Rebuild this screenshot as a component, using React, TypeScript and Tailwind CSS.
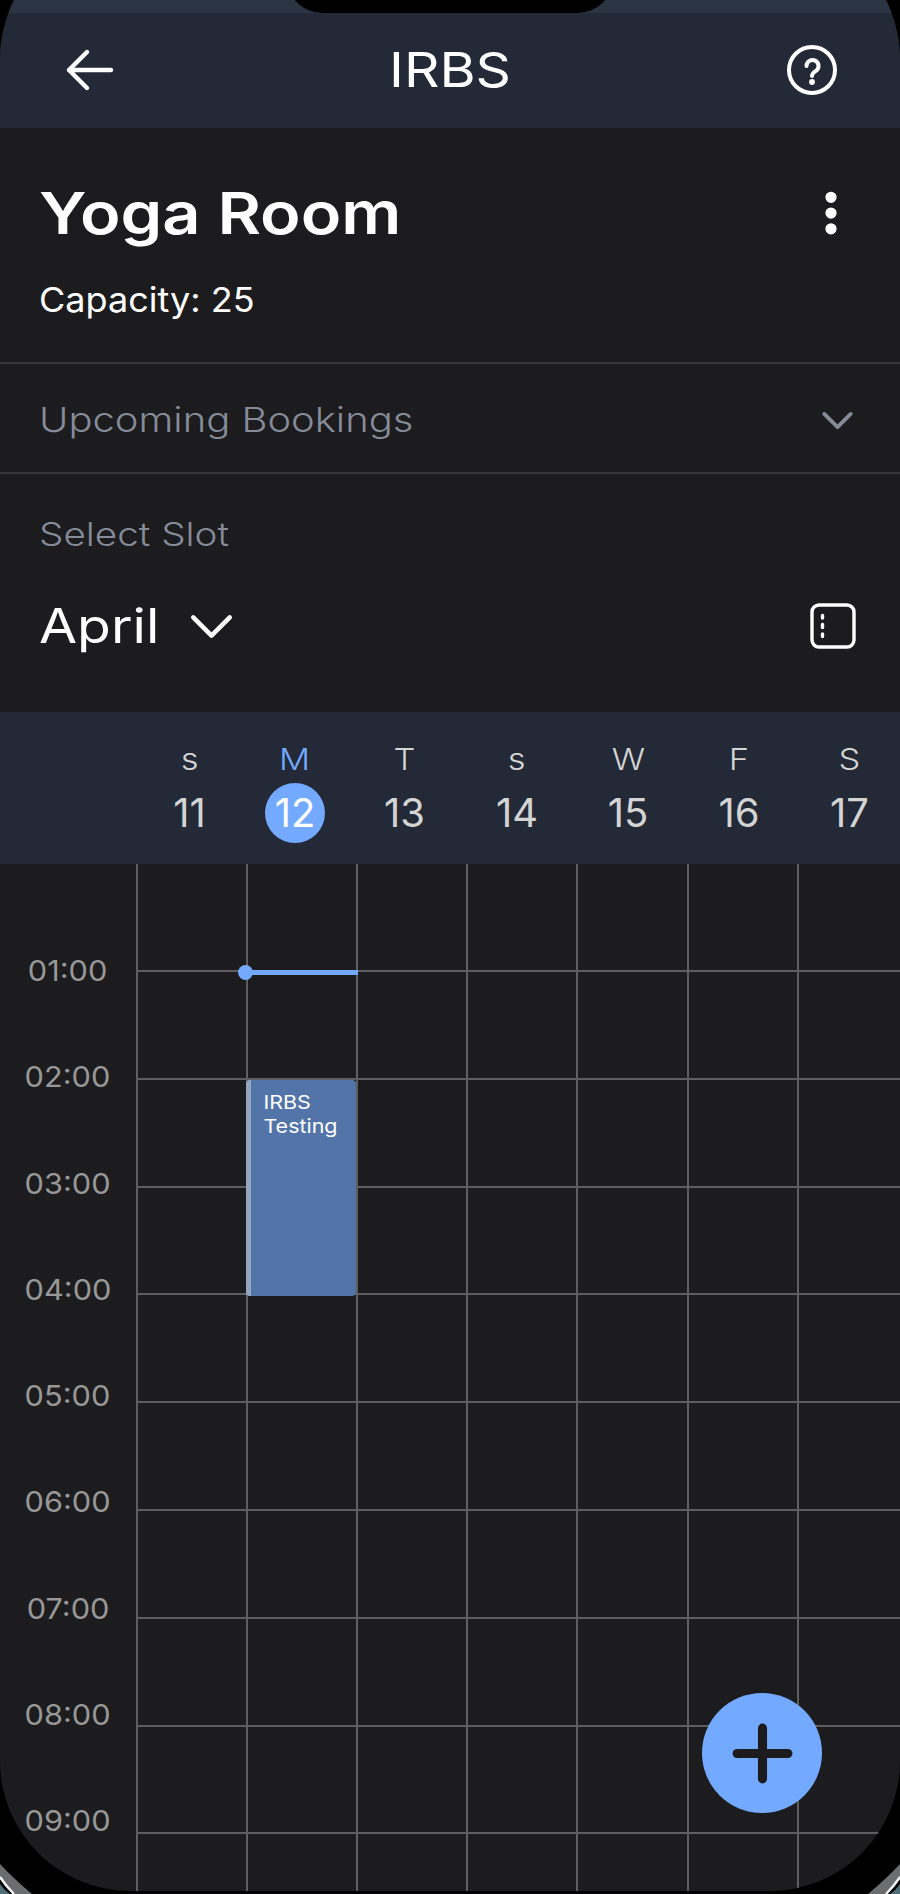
import { ChevronDown, EllipsisVertical, Plus } from "lucide-react";

// Room schedule screen, phone frame cropped at the edges.

const days = [
  { label: "s", date: "11", w: "w-[111px]" },
  { label: "M", date: "12", w: "w-[100px]", active: true },
  { label: "T", date: "13", w: "w-[119px]" },
  { label: "s", date: "14", w: "w-[106px]" },
  { label: "W", date: "15", w: "w-[116px]" },
  { label: "F", date: "16", w: "w-[106px]" },
  { label: "S", date: "17", w: "w-[115px]" },
];

const hours = ["01:00", "02:00", "03:00", "04:00", "05:00", "06:00", "07:00", "08:00", "09:00"];

function BackIcon() {
  return (
    <svg width="50" height="44" viewBox="0 0 50 44" fill="none" stroke="white" strokeWidth="4.4" strokeLinecap="round" strokeLinejoin="round">
      <path d="M22 4 4 22l18 18M4 22h42" />
    </svg>
  );
}

function HelpIcon() {
  return (
    <svg width="50" height="50" viewBox="0 0 50 50" fill="none" stroke="white" strokeWidth="4" strokeLinecap="round">
      <circle cx="25" cy="25" r="23" />
      <path d="M19.5 21a6 6 0 1 1 9.4 4.9c-2.4 1.6-3.9 2.6-3.9 5.1" />
      <circle cx="25" cy="37" r="2.9" fill="white" stroke="none" />
    </svg>
  );
}

function CalendarIcon() {
  return (
    <svg width="46" height="46" viewBox="0 0 46 46" fill="none" stroke="white" strokeWidth="3.4" strokeLinecap="round">
      <rect x="2" y="2" width="42" height="42" rx="7" />
      <path d="M12.5 12.5v2.5M12.5 21.5v3M12.5 31v2.5" />
    </svg>
  );
}

function FrameCorner({ className }: { className: string }) {
  return (
    <svg width="32" height="32" viewBox="0 0 32 32" className={className}>
      <path d="M0 2Q14 17 32 32H14Q6 24 0 15Z" fill="#6b6d6e" />
      <path d="M0 15Q6 24 14 32" fill="none" stroke="#f2f2f2" strokeWidth="2.4" />
      <path d="M0 22Q4 28 10 32H0Z" fill="#4f7078" />
    </svg>
  );
}

function Row({ first }: { first?: boolean }) {
  return (
    <div className={first ? "grid h-[106px] grid-cols-7" : "grid h-[107.8px] grid-cols-7 border-t-2 border-[#5e5e60]"}>
      {[0, 1, 2, 3, 4, 5, 6].map((i) => (
        <div key={i} className="border-l-2 border-[#5e5e60]" />
      ))}
    </div>
  );
}

export default function App() {
  return (
    <div className="relative h-[1894px] w-[900px] overflow-hidden bg-black font-['Inter',sans-serif] text-white">
      <div className="relative -mt-[71px] flex h-[1962px] flex-col overflow-hidden rounded-[130px] bg-[#1c1c1e]">
        <header className="relative h-[199px] shrink-0 bg-[#232936] pt-[71px]">
          <div className="absolute left-0 right-0 top-0 h-[84px] bg-[#2a3442]" />
          <div className="absolute left-[286px] top-0 h-[84px] w-[328px] rounded-b-[37px] bg-black" />
          <div className="relative flex h-[128px] items-center justify-between pl-[65px] pr-[63px] pt-[12px]">
            <BackIcon />
            <span className="-ml-[3px] inline-block scale-x-[1.15] text-[48px] leading-[60px]">IRBS</span>
            <HelpIcon />
          </div>
        </header>

        <section className="flex h-[236px] shrink-0 flex-col border-b-2 border-[#35363a] pl-[39px] pr-[44px]">
          <div className="mt-[50px] flex items-center justify-between">
            <h1 className="inline-block origin-left scale-x-[1.15] text-[58px] font-semibold leading-[70px]">Yoga Room</h1>
            <EllipsisVertical size={54} strokeWidth={3} fill="currentColor" className="-mr-[2px]" />
          </div>
          <p className="mt-[30px] origin-left scale-x-[1.06] text-[34px] leading-[44px]">Capacity: 25</p>
        </section>

        <section className="flex h-[110px] shrink-0 items-center justify-between border-b-2 border-[#35363a] pl-[39px] pr-[36px] pt-[4px] text-[#858b99]">
          <span className="inline-block origin-left scale-x-[1.175] text-[34px] font-light leading-[44px]">Upcoming Bookings</span>
          <ChevronDown size={53} strokeWidth={1.7} />
        </section>

        <section className="flex h-[238px] shrink-0 flex-col pl-[39px] pr-[44px]">
          <p className="mt-[38px] origin-left scale-x-[1.17] text-[33px] font-light leading-[44px] text-[#858b99]">Select Slot</p>
          <div className="mt-[38px] flex items-center justify-between">
            <div className="flex items-center gap-[31px]">
              <span className="inline-block origin-left scale-x-[1.15] text-[48px] leading-[64px]">April</span>
              <ChevronDown size={73} strokeWidth={1.48} className="-my-[5px]" />
            </div>
            <CalendarIcon />
          </div>
        </section>

        <section className="flex h-[152px] shrink-0 bg-[#232936] pl-[134px] pt-[27px]">
          {days.map((d) => (
            <div key={d.date} className={`flex shrink-0 flex-col items-center ${d.w}`}>
              <span
                className={
                  d.active
                    ? "inline-block scale-x-[1.15] text-[30px] font-light leading-[40px] text-[#73a9ff]"
                    : "inline-block scale-x-[1.15] text-[30px] font-light leading-[40px] text-[#d4d4d4]"
                }
              >
                {d.label}
              </span>
              <span
                className={
                  d.active
                    ? "mt-[4px] flex h-[60px] w-[60px] items-center justify-center rounded-full bg-[#73a9ff] text-[40px] text-white"
                    : "mt-[4px] flex h-[60px] items-center text-[40px] text-[#d4d4d4]"
                }
              >
                {d.date}
              </span>
            </div>
          ))}
        </section>

        <section className="flex flex-1">
          <div className="flex w-[135.5px] shrink-0 flex-col items-center pt-[85px] text-[#979797]">
            {hours.map((h) => (
              <div key={h} className="h-[106.25px] scale-x-[1.06] text-[29px] leading-[44px]">
                {h}
              </div>
            ))}
          </div>
          <div className="relative w-[771.5px] shrink-0">
            <Row first />
            {hours.map((h) => (
              <Row key={h} />
            ))}
            <div className="absolute left-[104px] top-[106px] h-[4.5px] w-[118px] bg-[#73a9ff]" />
            <div className="absolute left-[102px] top-[101px] h-[15px] w-[15px] rounded-full bg-[#73a9ff]" />
            <div className="absolute left-[110px] top-[216px] flex h-[216px] w-[110px] overflow-hidden rounded-[4px] bg-[#5274a8]">
              <div className="w-[5px] shrink-0 bg-[#95a5bd]" />
              <div className="origin-top-left scale-x-[1.13] pl-[11px] pt-[11px] text-[19px] leading-[24px]">
                IRBS
                <br />
                Testing
              </div>
            </div>
          </div>
        </section>

        <button
          type="button"
          className="absolute bottom-[78px] right-[78px] flex h-[120px] w-[120px] items-center justify-center rounded-full bg-[#73a9ff] text-[#1c1c1e]"
        >
          <Plus size={87} strokeWidth={2.5} />
        </button>
      </div>
      <FrameCorner className="absolute bottom-0 left-0" />
      <FrameCorner className="absolute bottom-0 right-0 -scale-x-100" />
    </div>
  );
}
